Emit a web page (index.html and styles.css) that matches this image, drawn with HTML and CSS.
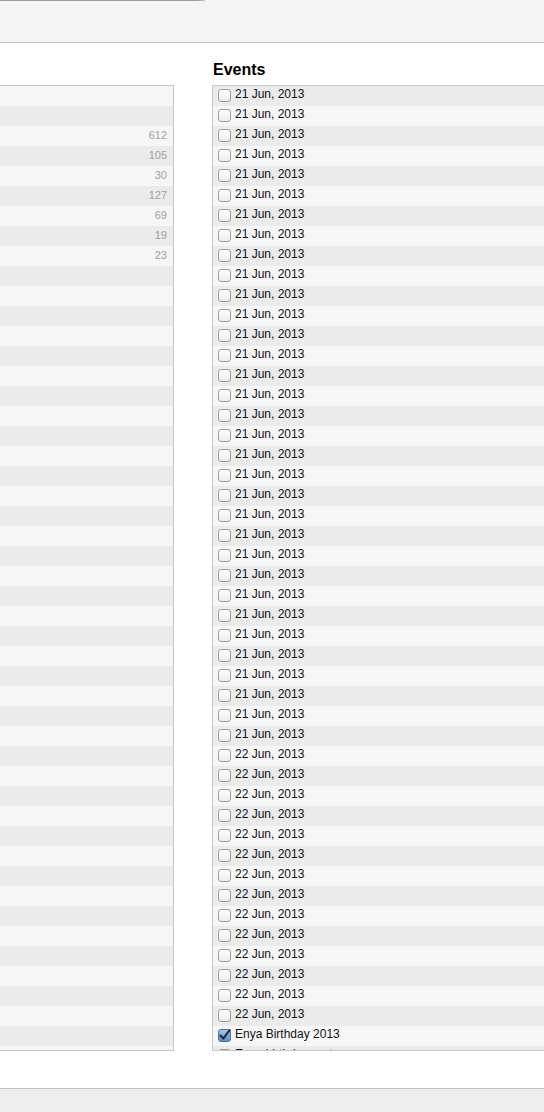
FILE: index.html
```html
<!DOCTYPE html>
<html>
<head>
<meta charset="utf-8">
<link rel="stylesheet" href="styles.css">
</head>
<body>
<header class="toolbar">
  <div class="field-edge"></div>
</header>
<main class="panes">
  <section class="pane pane-left">
    <h2 class="pane-title">&nbsp;</h2>
    <ul class="list counts">
      <li></li><li></li>
      <li>612</li><li>105</li><li>30</li><li>127</li><li>69</li><li>19</li><li>23</li>
      <li></li><li></li><li></li><li></li><li></li><li></li><li></li><li></li><li></li><li></li>
      <li></li><li></li><li></li><li></li><li></li><li></li><li></li><li></li><li></li><li></li>
      <li></li><li></li><li></li><li></li><li></li><li></li><li></li><li></li><li></li><li></li>
      <li></li><li></li><li></li><li></li><li></li><li></li><li></li><li></li><li></li><li></li>
    </ul>
  </section>
  <section class="pane pane-right">
    <h2 class="pane-title">Events</h2>
    <ul class="list events">
      <li><span class="cb"></span><span class="label">21 Jun, 2013</span></li>
      <li><span class="cb"></span><span class="label">21 Jun, 2013</span></li>
      <li><span class="cb"></span><span class="label">21 Jun, 2013</span></li>
      <li><span class="cb"></span><span class="label">21 Jun, 2013</span></li>
      <li><span class="cb"></span><span class="label">21 Jun, 2013</span></li>
      <li><span class="cb"></span><span class="label">21 Jun, 2013</span></li>
      <li><span class="cb"></span><span class="label">21 Jun, 2013</span></li>
      <li><span class="cb"></span><span class="label">21 Jun, 2013</span></li>
      <li><span class="cb"></span><span class="label">21 Jun, 2013</span></li>
      <li><span class="cb"></span><span class="label">21 Jun, 2013</span></li>
      <li><span class="cb"></span><span class="label">21 Jun, 2013</span></li>
      <li><span class="cb"></span><span class="label">21 Jun, 2013</span></li>
      <li><span class="cb"></span><span class="label">21 Jun, 2013</span></li>
      <li><span class="cb"></span><span class="label">21 Jun, 2013</span></li>
      <li><span class="cb"></span><span class="label">21 Jun, 2013</span></li>
      <li><span class="cb"></span><span class="label">21 Jun, 2013</span></li>
      <li><span class="cb"></span><span class="label">21 Jun, 2013</span></li>
      <li><span class="cb"></span><span class="label">21 Jun, 2013</span></li>
      <li><span class="cb"></span><span class="label">21 Jun, 2013</span></li>
      <li><span class="cb"></span><span class="label">21 Jun, 2013</span></li>
      <li><span class="cb"></span><span class="label">21 Jun, 2013</span></li>
      <li><span class="cb"></span><span class="label">21 Jun, 2013</span></li>
      <li><span class="cb"></span><span class="label">21 Jun, 2013</span></li>
      <li><span class="cb"></span><span class="label">21 Jun, 2013</span></li>
      <li><span class="cb"></span><span class="label">21 Jun, 2013</span></li>
      <li><span class="cb"></span><span class="label">21 Jun, 2013</span></li>
      <li><span class="cb"></span><span class="label">21 Jun, 2013</span></li>
      <li><span class="cb"></span><span class="label">21 Jun, 2013</span></li>
      <li><span class="cb"></span><span class="label">21 Jun, 2013</span></li>
      <li><span class="cb"></span><span class="label">21 Jun, 2013</span></li>
      <li><span class="cb"></span><span class="label">21 Jun, 2013</span></li>
      <li><span class="cb"></span><span class="label">21 Jun, 2013</span></li>
      <li><span class="cb"></span><span class="label">21 Jun, 2013</span></li>
      <li><span class="cb"></span><span class="label">22 Jun, 2013</span></li>
      <li><span class="cb"></span><span class="label">22 Jun, 2013</span></li>
      <li><span class="cb"></span><span class="label">22 Jun, 2013</span></li>
      <li><span class="cb"></span><span class="label">22 Jun, 2013</span></li>
      <li><span class="cb"></span><span class="label">22 Jun, 2013</span></li>
      <li><span class="cb"></span><span class="label">22 Jun, 2013</span></li>
      <li><span class="cb"></span><span class="label">22 Jun, 2013</span></li>
      <li><span class="cb"></span><span class="label">22 Jun, 2013</span></li>
      <li><span class="cb"></span><span class="label">22 Jun, 2013</span></li>
      <li><span class="cb"></span><span class="label">22 Jun, 2013</span></li>
      <li><span class="cb"></span><span class="label">22 Jun, 2013</span></li>
      <li><span class="cb"></span><span class="label">22 Jun, 2013</span></li>
      <li><span class="cb"></span><span class="label">22 Jun, 2013</span></li>
      <li><span class="cb"></span><span class="label">22 Jun, 2013</span></li>
      <li><span class="cb checked"><svg width="13" height="13" viewBox="0 0 13 13"><path d="M2.5 6.5 L5.3 9.6 L11.6 1.2" fill="none" stroke="#1d2d48" stroke-width="2.2" stroke-linecap="round" stroke-linejoin="round"/></svg></span><span class="label">Enya Birthday 2013</span></li>
      <li><span class="cb"></span><span class="label">Enya birthday party</span></li>
    </ul>
  </section>
</main>
<footer class="footbar"></footer>
</body>
</html>
```

FILE: styles.css
```css
html, body {
  margin: 0;
  padding: 0;
  background: #ffffff;
  overflow: hidden;
  width: 544px;
  height: 1112px;
  font-family: "Liberation Sans", Arial, sans-serif;
}

.toolbar {
  height: 42px;
  background: #f5f5f5;
  border-bottom: 1px solid #c4c4c4;
}

.field-edge {
  width: 205px;
  height: 1px;
  background: linear-gradient(to right, #9c9c9c 0%, #9c9c9c 96%, #c8c8c8 100%);
}

.panes {
  display: grid;
  grid-template-columns: 174px 400px;
  column-gap: 38px;
  padding-top: 17px;
  height: 1008px;
  box-sizing: border-box;
}

.pane-title {
  margin: 0 0 5px 1px;
  font-size: 16px;
  line-height: 20px;
  font-weight: bold;
  color: #000;
}

.list {
  list-style: none;
  margin: 0;
  padding: 0;
  height: 964px;
  overflow: hidden;
  border: 1px solid #c8c8c8;
}

.counts {
  border-left: none;
}

.list li {
  height: 20px;
  box-sizing: border-box;
}

.counts li:nth-child(odd) { background: #f6f6f6; }
.counts li:nth-child(even) { background: #ebebeb; }

.counts li {
  text-align: right;
  padding-right: 6px;
  padding-bottom: 2px;
  line-height: 18px;
  font-size: 11px;
  color: #a0a0a0;
}

.events li:nth-child(odd) { background: #ebebeb; }
.events li:nth-child(even) { background: #f6f6f6; }

.events li {
  display: flex;
  align-items: flex-start;
  padding-left: 5px;
  font-size: 12px;
  color: #111;
}

.label {
  line-height: 14px;
  margin-top: 1px;
}

.cb {
  width: 13px;
  height: 13px;
  box-sizing: border-box;
  border: 1px solid #9d9d9d;
  border-radius: 3px;
  background: linear-gradient(#ffffff, #ececec);
  margin-top: 3px;
  margin-right: 4px;
  flex: none;
  position: relative;
}

.cb.checked {
  background: linear-gradient(#a9c6e6, #5f8fc4);
  border-color: #4d6f98;
}

.cb.checked svg {
  position: absolute;
  left: -1px;
  top: -1px;
}

.footbar {
  margin-top: 37px;
  height: 24px;
  background: #eeeeee;
  border-top: 1px solid #c4c4c4;
}
```
